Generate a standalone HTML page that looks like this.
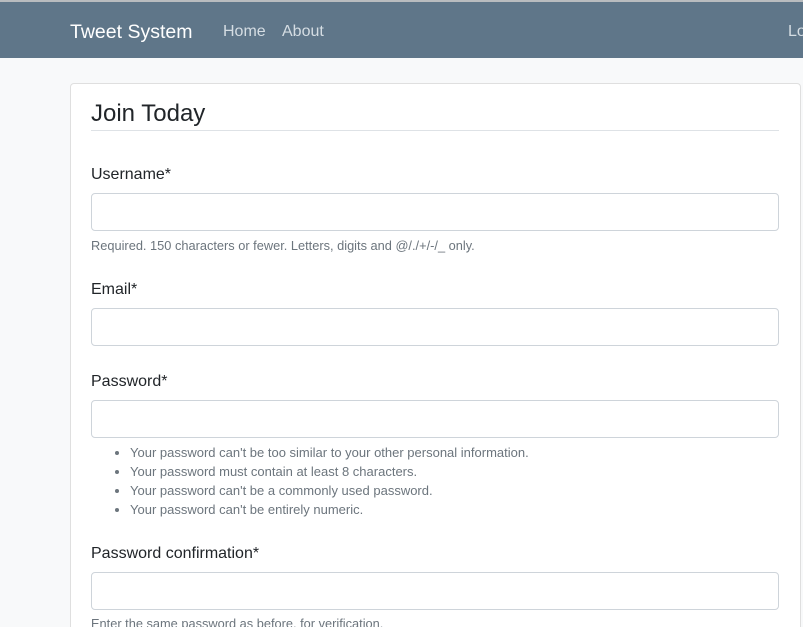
<!DOCTYPE html>
<html><head><style>
html,body{margin:0;width:803px;height:627px;overflow:hidden}
body{background:#f8f9fa;font-family:"Liberation Sans",sans-serif;position:relative;color:#212529}
.top{position:absolute;left:0;top:0;width:803px;height:2px;background:#b9bcbf}
.nav{position:absolute;left:0;top:2px;width:803px;height:56px;background:#5f7689}
.a{position:absolute;white-space:nowrap}
.card{position:absolute;left:70px;top:83px;width:729px;height:544px;background:#fff;border:1px solid #dfdfdf;border-bottom:none;border-radius:4px 4px 0 0}
.inp{position:absolute;left:91px;width:686px;height:36px;border:1px solid #ced4da;border-radius:4px;background:#fff}
.lbl{font-size:16px;color:#212529}
.help{font-size:12.8px;color:#6c757d;line-height:14px}
ul{position:absolute;left:112px;top:443px;margin:0;padding:0 0 0 18px;font-size:13px;color:#6c757d;line-height:19px}
</style></head><body>
<div class="top"></div>
<div class="nav"></div>
<div class="a" style="left:70px;top:21px;font-size:19.5px;color:#fff">Tweet System</div>
<div class="a" style="left:223px;top:23px;font-size:16px;color:#d5dde3">Home</div>
<div class="a" style="left:282px;top:23px;font-size:16px;color:#d5dde3">About</div>
<div class="a" style="left:788px;top:23px;font-size:16px;color:#d5dde3">Lo</div>
<div class="card"></div>
<div class="a" style="left:91px;top:100px;font-size:24px;color:#212529">Join Today</div>
<div class="a" style="left:91px;top:130px;width:688px;height:1px;background:#dee2e6"></div>
<div class="a lbl" style="left:91px;top:166px">Username*</div>
<div class="inp" style="top:193px"></div>
<div class="a help" style="left:91px;top:239px">Required. 150 characters or fewer. Letters, digits and @/./+/-/_ only.</div>
<div class="a lbl" style="left:91px;top:281px">Email*</div>
<div class="inp" style="top:308px"></div>
<div class="a lbl" style="left:91px;top:373px">Password*</div>
<div class="inp" style="top:400px"></div>
<ul>
<li>Your password can't be too similar to your other personal information.</li>
<li>Your password must contain at least 8 characters.</li>
<li>Your password can't be a commonly used password.</li>
<li>Your password can't be entirely numeric.</li>
</ul>
<div class="a lbl" style="left:91px;top:545px">Password confirmation*</div>
<div class="inp" style="top:572px"></div>
<div class="a help" style="left:91px;top:617px;height:10px;overflow:hidden">Enter the same password as before, for verification.</div>
</body></html>
